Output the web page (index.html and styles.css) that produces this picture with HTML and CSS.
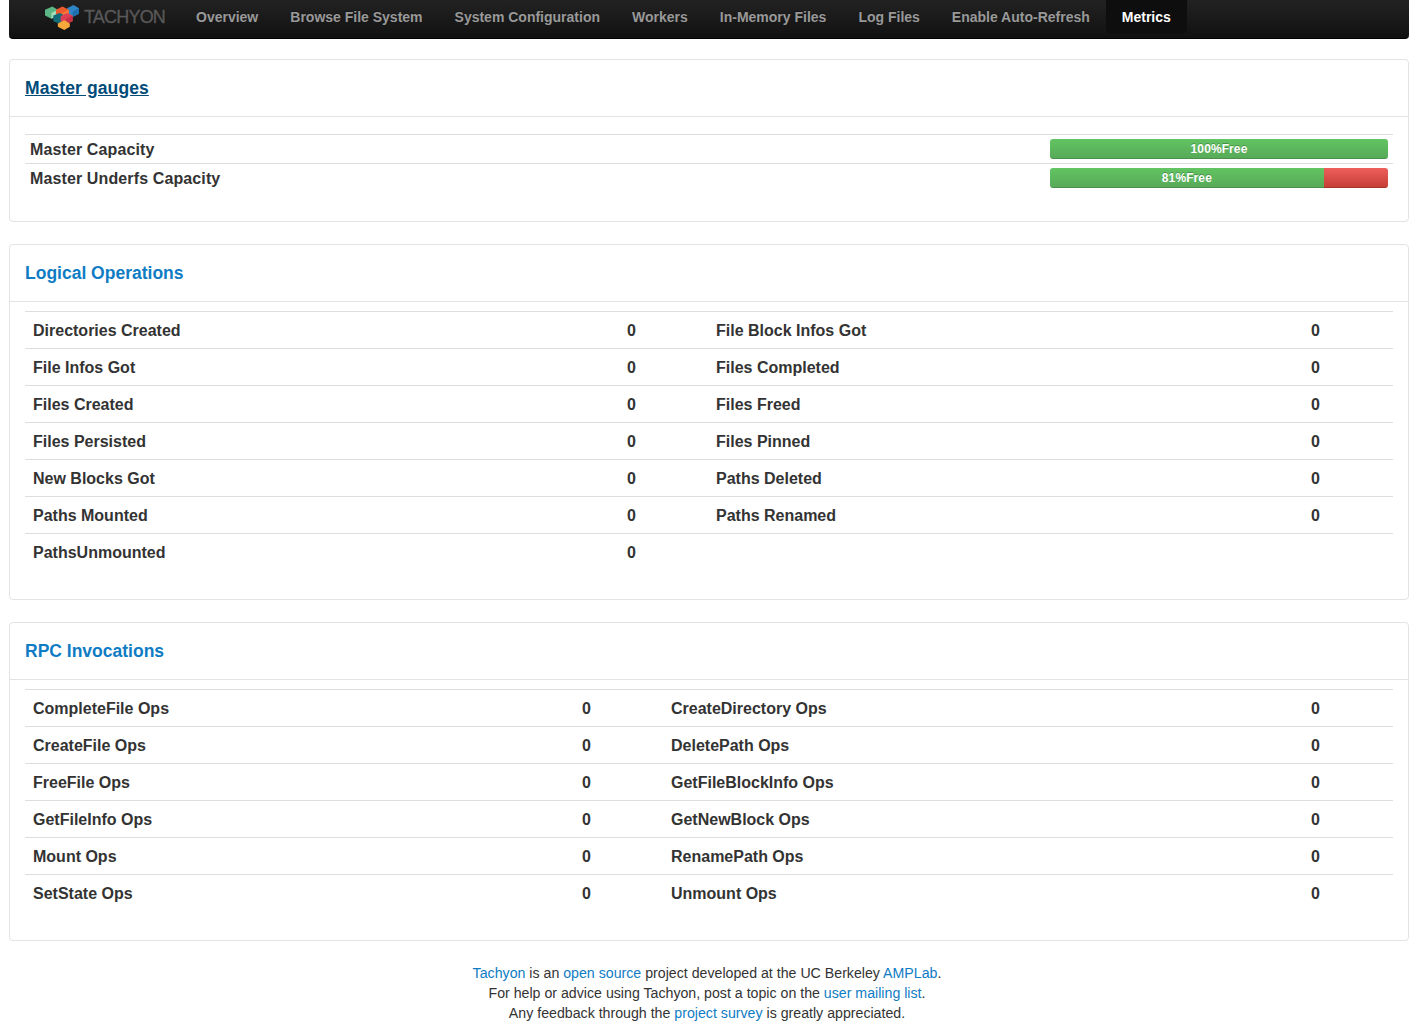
FILE: index.html
```html
<!DOCTYPE html>
<html lang="en">
<head>
    <meta charset="UTF-8">
    <title>Tachyon Metrics</title>
    <link rel="stylesheet" href="styles.css">
</head>
<body>

    <nav class="navbar">
        <a class="brand" href="#">
            <svg class="logo" width="34" height="25" viewBox="0 0 37 31" preserveAspectRatio="none">
                <polygon points="0,6 8,2 14,6 14,13 7,17 0,13" fill="#5cb585"/>
                <polygon points="7,10 14,6 14,13 7,17" fill="#a6dcb8"/>
                <polygon points="24,4 31,0 37,4 37,11 30,15 24,11" fill="#2f86c6"/>
                <polygon points="30,8 37,4 37,11 30,15" fill="#1f6fae"/>
                <polygon points="12,6 19,2 26,6 26,14 19,18 12,14" fill="#ee5a2b"/>
                <polygon points="19,10 26,6 26,14 19,18" fill="#f47b3a"/>
                <polygon points="9,13 16,10 21,13 21,20 15,23 9,20" fill="#136a78"/>
                <polygon points="17,14 24,10 30,13 30,20 23,24 17,20" fill="#de3f55"/>
                <polygon points="23,17 30,13 30,20 23,24" fill="#c93048"/>
                <polygon points="14,23 21,19 27,23 27,27 21,31 14,27" fill="#f6a83a"/>
            </svg>
            <span class="brand-name">TACHYON</span>
        </a>
        <ul class="nav">
            <li><a href="#">Overview</a></li>
            <li><a href="#">Browse File System</a></li>
            <li><a href="#">System Configuration</a></li>
            <li><a href="#">Workers</a></li>
            <li><a href="#">In-Memory Files</a></li>
            <li><a href="#">Log Files</a></li>
            <li><a href="#">Enable Auto-Refresh</a></li>
            <li class="active"><a href="#">Metrics</a></li>
        </ul>
    </nav>

    <section class="card">
        <h2 class="card-title"><a class="visited" href="#">Master gauges</a></h2>
        <div class="card-body gauges">
            <table class="table">
                <tr>
                    <th>Master Capacity</th>
                    <td class="gauge-cell">
                        <div class="progress"><div class="bar bar-free" style="width: 100%">100%Free</div></div>
                    </td>
                </tr>
                <tr>
                    <th>Master Underfs Capacity</th>
                    <td class="gauge-cell">
                        <div class="progress">
                            <div class="bar bar-free" style="width: 81%">81%Free</div>
                            <div class="bar bar-used" style="width: 19%"></div>
                        </div>
                    </td>
                </tr>
            </table>
        </div>
    </section>

    <section class="card">
        <h2 class="card-title"><a href="#">Logical Operations</a></h2>
        <div class="card-body">
            <table class="table stats logical">
                <colgroup><col class="c1"><col class="c2"><col class="c3"><col></colgroup>
                <tr><th>Directories Created</th><td>0</td><th>File Block Infos Got</th><td>0</td></tr>
                <tr><th>File Infos Got</th><td>0</td><th>Files Completed</th><td>0</td></tr>
                <tr><th>Files Created</th><td>0</td><th>Files Freed</th><td>0</td></tr>
                <tr><th>Files Persisted</th><td>0</td><th>Files Pinned</th><td>0</td></tr>
                <tr><th>New Blocks Got</th><td>0</td><th>Paths Deleted</th><td>0</td></tr>
                <tr><th>Paths Mounted</th><td>0</td><th>Paths Renamed</th><td>0</td></tr>
                <tr><th>PathsUnmounted</th><td>0</td><th></th><td></td></tr>
            </table>
        </div>
    </section>

    <section class="card">
        <h2 class="card-title"><a href="#">RPC Invocations</a></h2>
        <div class="card-body">
            <table class="table stats rpc">
                <colgroup><col class="c1"><col class="c2"><col class="c3"><col></colgroup>
                <tr><th>CompleteFile Ops</th><td>0</td><th>CreateDirectory Ops</th><td>0</td></tr>
                <tr><th>CreateFile Ops</th><td>0</td><th>DeletePath Ops</th><td>0</td></tr>
                <tr><th>FreeFile Ops</th><td>0</td><th>GetFileBlockInfo Ops</th><td>0</td></tr>
                <tr><th>GetFileInfo Ops</th><td>0</td><th>GetNewBlock Ops</th><td>0</td></tr>
                <tr><th>Mount Ops</th><td>0</td><th>RenamePath Ops</th><td>0</td></tr>
                <tr><th>SetState Ops</th><td>0</td><th>Unmount Ops</th><td>0</td></tr>
            </table>
        </div>
    </section>

    <footer class="footer">
        <a href="#">Tachyon</a> is an <a href="#">open source</a> project developed at the UC Berkeley <a href="#">AMPLab</a>.<br>
        For help or advice using Tachyon, post a topic on the <a href="#">user mailing list</a>.<br>
        Any feedback through the <a href="#">project survey</a> is greatly appreciated.
    </footer>

</body>
</html>
```

FILE: styles.css
```css
/* General Styles */
body {
    font-family: "Liberation Sans", Arial, sans-serif;
    font-size: 14px;
    line-height: 20px;
    color: #333;
    background-color: #fff;
    margin: 0;
    padding: 0 11px 0 9px;
}

a {
    color: #0f7cc4;
    text-decoration: none;
}

/* Navbar */
.navbar {
    display: flex;
    align-items: stretch;
    height: 38px;
    margin-bottom: 20px;
    padding-left: 35px;
    background-image: linear-gradient(to bottom, #222, #111);
    border-bottom: 1px solid #000;
    border-radius: 0 0 4px 4px;
}

.brand {
    display: flex;
    align-items: flex-start;
    width: 136px;
}

.logo {
    display: block;
    flex: none;
    margin: 5px 0 0 1px;
}

.brand-name {
    margin: 7px 0 0 5px;
    font-size: 18px;
    letter-spacing: -0.8px;
    color: #585858;
    -webkit-text-stroke: 0.3px #585858;
}

.nav {
    display: flex;
    list-style: none;
    margin: 0;
    padding: 0;
}

.nav a {
    display: block;
    padding: 7px 16px 0;
    height: 27px;
    font-weight: bold;
    color: #999;
    text-shadow: 0 -1px 0 rgba(0, 0, 0, 0.25);
}

.nav .active a {
    color: #fff;
    background-color: #0e0e0e;
    border-radius: 0 0 5px 5px;
}

/* Cards */
.card {
    border: 1px solid #e3e3e3;
    border-radius: 4px;
    margin-bottom: 22px;
}

.card-title {
    margin: 0;
    height: 56px;
    padding: 0 15px;
    font-size: 17.5px;
    line-height: 56px;
    border-bottom: 1px solid #e3e3e3;
}

.card-title .visited {
    color: #004b78;
    text-decoration: underline;
    letter-spacing: 0.1px;
}

.card-body {
    padding: 9px 15px 29px;
}

.gauges {
    padding-top: 17px;
}

.gauges th {
    letter-spacing: 0.12px;
}

/* Tables */
.table {
    width: 100%;
    border-collapse: collapse;
    table-layout: fixed;
    font-size: 16px;
}

.table th,
.table td {
    text-align: left;
    font-weight: bold;
    border-top: 1px solid #ddd;
    padding: 5px 5px 3px;
    height: 20px;
}

.table .gauge-cell {
    width: 338px;
    padding: 4px 5px 4px 0;
}

.stats th,
.stats td {
    padding: 9px 8px 7px;
}

.logical .c1 { width: 594px; }
.logical .c2 { width: 89px; }
.logical .c3 { width: 595px; }

.rpc .c1 { width: 549px; }
.rpc .c2 { width: 89px; }
.rpc .c3 { width: 640px; }

/* Gauges */
.progress {
    display: flex;
    height: 20px;
    border-radius: 3px;
    overflow: hidden;
}

.bar {
    height: 20px;
    font-size: 12px;
    line-height: 20px;
    letter-spacing: 0.1px;
    text-align: center;
    color: #fff;
    text-shadow: 0 -1px 0 rgba(0, 0, 0, 0.25);
    box-shadow: inset 0 -1px 0 rgba(0, 0, 0, 0.15);
}

.bar-free {
    background-image: linear-gradient(to bottom, #62c462, #57a957);
}

.bar-used {
    background-image: linear-gradient(to bottom, #ee5f5b, #c43c35);
}

/* Footer */
.footer {
    font-size: 14.18px;
    padding-right: 4px;
    text-align: center;
}
```
